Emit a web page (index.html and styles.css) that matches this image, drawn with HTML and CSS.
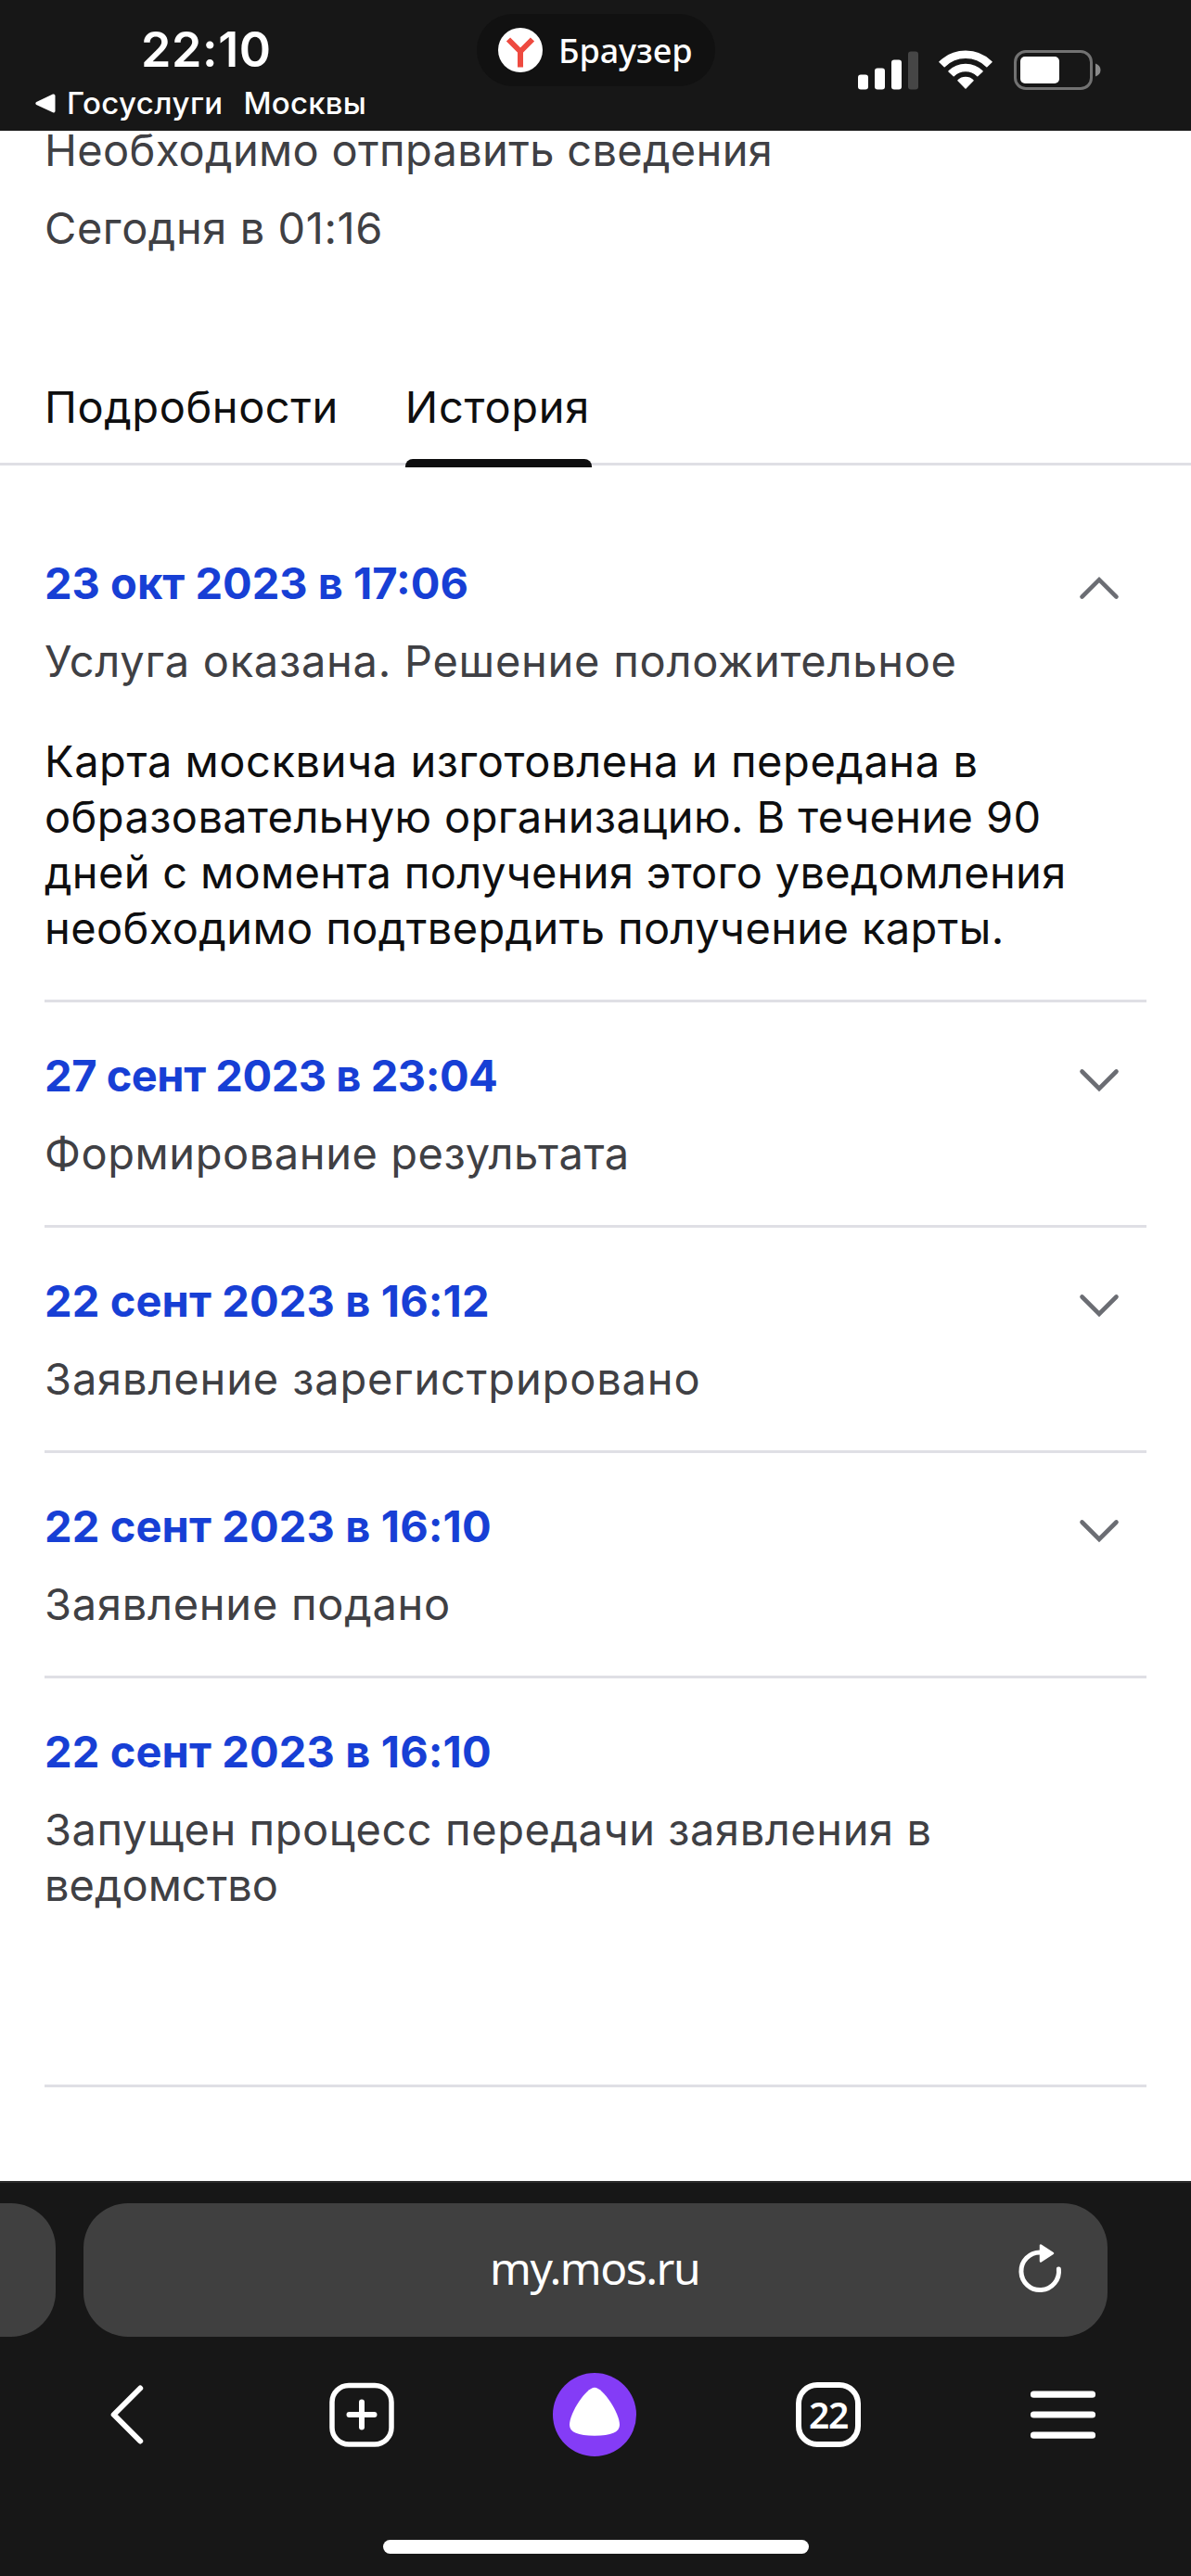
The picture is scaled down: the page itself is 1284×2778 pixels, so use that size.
FILE: index.html
```html
<!DOCTYPE html>
<html lang="ru">
<head>
<meta charset="utf-8">
<title>История заявления</title>
<link rel="stylesheet" href="styles.css">
</head>
<body>
<div class="screen">
  <header class="status">
    <div class="status-left">
      <div class="clock">22:10</div>
      <div class="back-app">
        <svg class="back-mark" viewBox="0 0 22 21"><path d="M1.2 9 19 .5Q21.5 0 21.5 2.500V18.500Q21.5 21 19 20.200L1.200 12Q-.6 10.500 1.200 9Z" fill="#fff"/></svg>
        <span>Госуслуги</span><span class="city">Москвы</span>
      </div>
    </div>
    <div class="app-pill">
      <svg class="app-logo" viewBox="0 0 48 48"><circle cx="24" cy="24" r="24" fill="#fff"/><path d="M11 12.500 24 25.500 37 12.500M24 24V42.500" fill="none" stroke="#ee4a40" stroke-width="6" stroke-linejoin="round"/></svg>
      <span>Браузер</span>
    </div>
    <div class="indicators">
      <svg class="signal" viewBox="0 0 65 42"><g fill="#fff"><rect y="25.500" width="11" height="16" rx="3"/><rect x="18" y="18.500" width="11" height="23" rx="3"/><rect x="36" y="9.500" width="11" height="32" rx="3"/></g><rect x="54" y=".5" width="11" height="41" rx="3" fill="#464646"/></svg>
      <svg class="wifi" viewBox="0 0 58 42"><g fill="#fff" stroke="#fff" stroke-width="1.500" stroke-linejoin="round"><path d="M1 12.800A40 40 0 0 1 57 12.800L51.800 17.700A32.500 32.500 0 0 0 6.200 17.700Z"/><path d="M11 22.900A25.500 25.500 0 0 1 47 22.900L41.800 27.800A18.200 18.200 0 0 0 16.200 27.800Z"/><path d="M21 32.800A11.500 11.500 0 0 1 37 32.800L29 41Z"/></g></svg>
      <svg class="battery" viewBox="0 0 94 43"><rect x="1.500" y="1.500" width="82" height="40" rx="11.500" fill="none" stroke="#727272" stroke-width="3"/><rect x="7" y="7" width="42" height="29" rx="5" fill="#fff"/><path d="M88 14.500Q93.500 16.500 93.500 21.500T88 28.500Z" fill="#8a8a8a"/></svg>
    </div>
  </header>

  <main class="page">
    <section class="summary">
      <p class="summary-state sp-xs">Необходимо отправить сведения</p>
      <p class="sp-m">Сегодня в 01:16</p>
    </section>

    <nav class="tabs">
      <a class="tab sp-m">Подробности</a>
      <a class="tab tab-active sp-l">История</a>
    </nav>

    <ul class="history">
      <li class="entry">
        <div class="entry-head"><h2 class="date">23 окт 2023 в 17:06</h2><svg class="chevron" viewBox="0 0 48 48"><path d="M5.500 33.600 24 15.200 42.500 33.600"/></svg></div>
        <p class="state sp-l">Услуга оказана. Решение положительное</p>
        <div class="details">
          <div class="sp-m">Карта москвича изготовлена и передана в</div>
          <div class="sp-s">образовательную организацию. В течение 90</div>
          <div class="sp-xs">дней с момента получения этого уведомления</div>
          <div class="sp-s">необходимо подтвердить получение карты.</div>
        </div>
      </li>
      <li class="entry">
        <div class="entry-head"><h2 class="date date-tight">27 сент 2023 в 23:04</h2><svg class="chevron" viewBox="0 0 48 48"><path d="M5.500 14.500 24 33 42.500 14.500"/></svg></div>
        <p class="state sp-m">Формирование результата</p>
      </li>
      <li class="entry">
        <div class="entry-head"><h2 class="date date-wide">22 сент 2023 в 16:12</h2><svg class="chevron" viewBox="0 0 48 48"><path d="M5.500 14.500 24 33 42.500 14.500"/></svg></div>
        <p class="state sp-ll">Заявление зарегистрировано</p>
      </li>
      <li class="entry">
        <div class="entry-head"><h2 class="date date-wide">22 сент 2023 в 16:10</h2><svg class="chevron" viewBox="0 0 48 48"><path d="M5.500 14.500 24 33 42.500 14.500"/></svg></div>
        <p class="state sp-l">Заявление подано</p>
      </li>
      <li class="entry entry-last">
        <div class="entry-head"><h2 class="date date-wide">22 сент 2023 в 16:10</h2></div>
        <p class="state"><span class="sp-m">Запущен процесс передачи заявления в</span> ведомство</p>
      </li>
    </ul>
  </main>

  <footer class="browser">
    <div class="address-row">
      <div class="prev-tab"></div>
      <div class="address">
        <span class="host">my.mos.ru</span>
        <svg class="reload" viewBox="0 0 48 54"><path d="M43.400 28A20.300 20.300 0 1 1 23.500 10" fill="none" stroke="#fff" stroke-width="5" stroke-linecap="round"/><path d="M24 2.500V19.500L37 11Z" fill="#fff" stroke="#fff" stroke-width="2.500" stroke-linejoin="round"/></svg>
      </div>
    </div>
    <div class="toolbar">
      <div class="tool"><svg class="icon" viewBox="0 0 90 90"><path d="M57.200 16.500 28.700 45 57.200 73.500" fill="none" stroke="#fff" stroke-width="6" stroke-linecap="round" stroke-linejoin="round"/></svg></div>
      <div class="tool"><svg class="icon" viewBox="0 0 90 90"><rect x="13" y="13.500" width="64" height="63.500" rx="18" fill="none" stroke="#fff" stroke-width="5.500"/><path d="M31.500 45H58.500M45 31.500V58.500" stroke="#fff" stroke-width="6" stroke-linecap="round"/></svg></div>
      <div class="tool"><svg class="icon" viewBox="0 0 90 90"><circle cx="45" cy="45" r="45" fill="#843cf6"/><path d="M45 15.700C54 15.700 72 43 72 56C72 64 63 67.700 45 67.700S18 64 18 56C18 43 36 15.700 45 15.700Z" fill="#fff"/></svg></div>
      <div class="tool tool-tabs"><div class="tab-count">22</div></div>
      <div class="tool"><svg class="icon" viewBox="0 0 90 90"><path d="M13.500 23.200H76.500M13.500 45H76.500M13.500 67.200H76.500" stroke="#fff" stroke-width="7.200" stroke-linecap="round"/></svg></div>
    </div>
    <div class="home-bar"></div>
  </footer>
</div>
</body>
</html>
```
FILE: styles.css
```css
* { box-sizing: border-box; }

body {
  margin: 0;
  background: #fff;
  font-family: Inter, "Liberation Sans", sans-serif;
}

p, h2, ul { margin: 0; padding: 0; }
svg { display: block; flex: none; }

.screen {
  width: 1284px;
  height: 2778px;
  display: flex;
  flex-direction: column;
  overflow: hidden;
}

/* Status bar */
.status {
  flex: none;
  height: 141px;
  display: flex;
  align-items: flex-start;
  background: #171717;
  color: #fff;
}
.status-left { width: 514px; padding-top: 22px; }
.clock {
  padding-left: 152px;
  font-size: 52px;
  font-weight: 600;
  line-height: 64px;
  letter-spacing: 0.6px;
}
.back-app {
  display: flex;
  align-items: center;
  padding: 5px 0 0 38px;
  font-size: 33px;
  font-weight: 500;
  line-height: 40px;
  letter-spacing: 0.4px;
}
.back-mark { width: 22px; height: 21px; margin-right: 12px; }
.city { margin-left: 22px; letter-spacing: 0.2px; }

.app-pill {
  display: flex;
  align-items: center;
  width: 257px;
  height: 78px;
  margin-top: 15px;
  padding-left: 23px;
  border-radius: 39px;
  background: #111;
  font: 500 36px/49px "Noto Sans", sans-serif;
  letter-spacing: 0.1px;
}
.app-logo { width: 48px; height: 48px; margin-right: 17px; }

.indicators { display: flex; margin: 54px 0 0 154px; }
.signal { width: 65px; height: 42px; margin-top: 1px; }
.wifi { width: 58px; height: 42px; margin-left: 22px; }
.battery { width: 94px; height: 43px; margin-left: 23px; }

/* Page */
.page {
  flex: 1;
  min-height: 0;
  overflow: hidden;
  font-size: 47px;
  line-height: 60px;
  color: #0e0e0f;
}
.summary {
  display: flex;
  flex-direction: column;
  gap: 33px;
  padding: 0 48px;
  color: #3f4044;
}
.summary-state { line-height: 42px; }

.tabs {
  display: flex;
  gap: 72px;
  height: 226px;
  padding: 133px 0 0 48px;
  border-bottom: 3px solid #dfdfe5;
}
.tab { position: relative; height: 60px; }
.tab-active::after {
  content: "";
  position: absolute;
  left: 0;
  top: 86px;
  width: 201px;
  height: 9px;
  border-radius: 8px 8px 0 0;
  background: #0e0e0f;
}

.history { list-style: none; margin: 48px 48px 0; }
.entry { padding: 49px 0 47px; border-bottom: 3px solid #dfdfe5; }
.entry-last { padding-bottom: 185px; }
.entry-head { display: flex; justify-content: space-between; height: 60px; }
.date { font-size: 47px; font-weight: 700; color: #173fd5; }
.date-tight { letter-spacing: -0.47px; }
.date-wide { letter-spacing: 0.12px; }
.chevron {
  width: 48px;
  height: 48px;
  margin: 11px 27px 0 0;
  fill: none;
  stroke: #6b6d73;
  stroke-width: 4.6;
  stroke-linecap: round;
}
.state { margin-top: 24px; color: #3f4044; }
.details { margin-top: 48px; white-space: nowrap; }

.sp-xs { letter-spacing: 0.32px; }
.sp-s { letter-spacing: 0.39px; }
.sp-m { letter-spacing: 0.56px; }
.sp-l { letter-spacing: 0.73px; }
.sp-ll { letter-spacing: 0.85px; }

/* Browser controls */
.browser {
  flex: none;
  height: 426px;
  border-top: 2px solid #2b2b2b;
  background: #171717;
  color: #fff;
}
.address-row { display: flex; gap: 30px; padding-top: 22px; }
.prev-tab { width: 60px; height: 144px; border-radius: 0 48px 48px 0; background: #404040; }
.address {
  display: flex;
  align-items: center;
  justify-content: space-between;
  width: 1104px;
  height: 144px;
  padding: 0 48px 4px 438px;
  border-radius: 48px;
  background: #404040;
}
.host { font: 48px/66px "Noto Sans", sans-serif; letter-spacing: -1.5px; }
.reload { width: 48px; height: 54px; }

.toolbar { display: flex; padding: 39px 0 0 13px; }
.tool { display: flex; justify-content: center; width: 251px; }
.tool-tabs { width: 254px; }
.icon { width: 90px; height: 90px; }
.tab-count {
  width: 70px;
  height: 70px;
  margin-top: 10px;
  border: 6px solid #fff;
  border-radius: 23px;
  font: 600 39px/57px "Noto Sans", sans-serif;
  letter-spacing: -1.3px;
  text-align: center;
}
.home-bar { width: 459px; height: 15px; margin: 90px 0 0 413px; border-radius: 8px; background: #fff; }
```
